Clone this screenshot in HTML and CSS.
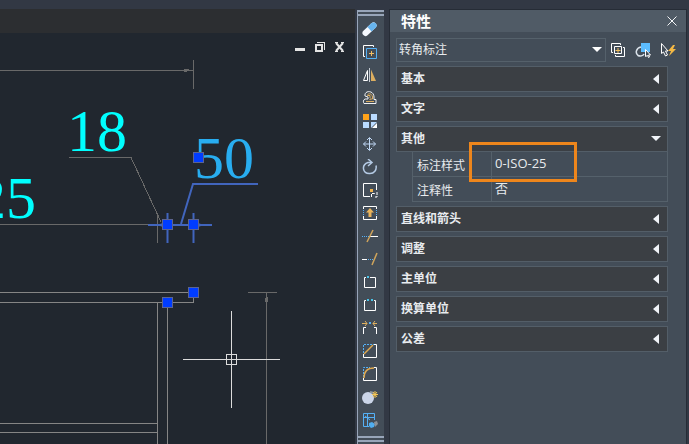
FILE: index.html
```html
<!DOCTYPE html>
<html lang="zh-CN">
<head>
<meta charset="utf-8">
<title>特性</title>
<link rel="stylesheet" href="styles.css">
</head>
<body>
<main class="workspace">
  <section class="document">
    <div class="tabstrip"></div>
    <div class="canvas">
      <svg class="drawing" aria-label="图形">
        <g transform="translate(0 -33)">
          <g class="thin">
            <path d="M0 70.500H194M193.500 60V89"/>
            <path d="M0 224.500H150M69 157.500H131L161 222M157.500 213V243"/>
            <path d="M248 292.500H277M266.500 292V444"/>
          </g>
          <path class="arrow" d="M184 69h5v1h4v1h-6v1h-3zM266 293h1v4h1v5h-3v-4h1z"/>
          <g class="outline">
            <path d="M0 292.500H193.500V302.500H0M157.500 302V444M167.500 302V444M0 423.500H157M0 432.500H157"/>
          </g>
          <g class="selected">
            <path d="M148 225H212M167.500 213V243M193.500 213V243M181 224L193 184H258"/>
            <path class="selected-tip" d="M157 225l9-3v6zM204 225l-9-3v6z"/>
          </g>
          <g class="dimension">
            <text x="67" y="151">18</text>
            <text x="-24" y="218">25</text>
            <text class="picked" x="194" y="178">50</text>
          </g>
          <g class="grip">
            <path d="M193.500 152.500h10v10h-10zM162.500 219.500h10v10h-10zM188.500 219.500h10v10h-10zM188.500 287.500h10v10h-10zM162.500 297.500h10v10h-10z"/>
          </g>
          <path class="crosshair" d="M183 359.500H280M231.500 311V408M226.500 354.500h10v10h-10z"/>
        </g>
      </svg>
      <div class="window-buttons">
        <button type="button" aria-label="最小化"><svg width="12" height="12"><path fill="#e4e4e4" d="M1 7h10v3H1z"/></svg></button>
        <button type="button" aria-label="还原"><svg width="12" height="12"><path fill="#e4e4e4" fill-rule="evenodd" d="M1 3h8v8H1zM3 5v4h4V5zM3 1h8v8h-1V2H3z"/></svg></button>
        <button type="button" aria-label="关闭"><svg width="12" height="12"><path fill="none" stroke="#e4e4e4" stroke-width="2" d="M2 2l7 8M9 2l-7 8"/><path fill="#e4e4e4" d="M1 1h3v1H1zM7 1h3v1H7zM1 10h3v1H1zM7 10h3v1H7z"/></svg></button>
      </div>
    </div>
  </section>

  <nav class="toolbar" aria-label="修改">
    <div class="handle"></div>
    <div class="tools">
      <button type="button" aria-label="删除"><svg viewBox="0 0 16 16"><path d="M3.500 12L11.500 4.500" stroke="#f5f9ff" stroke-width="6" stroke-linecap="round"/><path d="M7.500 8.200L11.500 4.500" stroke="#67b4ee" stroke-width="6"/><path d="M11.500 4.500h.1" stroke="#67b4ee" stroke-width="6" stroke-linecap="round"/></svg></button>
      <button type="button" aria-label="复制"><svg viewBox="0 0 16 16"><path d="M3 12.500H1.500v-11h10V3" stroke="#fff"/><path d="M4.500 4.500h10v10h-10z" stroke="#55b0f5"/><path d="M9.500 7v5M7 9.500h5" stroke="#f1bd63"/></svg></button>
      <button type="button" aria-label="镜像"><svg viewBox="0 0 16 16"><path d="M5.500 3.500v10h-4z" stroke="#fff"/><path d="M7.500 1v14" stroke="#c5cbd2"/><path d="M9 2.500V14h5z" fill="#dcae60"/></svg></button>
      <button type="button" aria-label="偏移"><svg viewBox="0 0 16 16"><path d="M2 13.500h12v-4h-2V7c0-7-10-7-9-1l3 1v2H3c-2 1-2 3-1 4.500z" stroke="#eef0f2"/><path d="M4 11.500h8M8 10V9h2.500V7C10 3 5.500 3 5.500 5.500H8V8" stroke="#dcae60"/></svg></button>
      <button type="button" aria-label="阵列"><svg viewBox="0 0 16 16"><path d="M1 1h6v6H1z" fill="#ffa31a"/><path d="M9 1h6v6H9zM1 9h6v6H1z" fill="#badbff"/><path d="M9 9h6l-6 6z" fill="#badbff"/><path d="M15 10v5h-5z" fill="#fff"/></svg></button>
      <button type="button" aria-label="移动"><svg viewBox="0 0 16 16"><path d="M7.500 2v12M1.500 8h12M5 4l2.500-2.500L10 4M5 12l2.500 2.500L10 12M4 5.500L1.500 8 4 10.500M11 5.500L13.500 8 11 10.500" stroke="#c0d8f5"/></svg></button>
      <button type="button" aria-label="旋转"><svg viewBox="0 0 16 16"><path d="M9 3.500H6C-1 6 .500 15 8 14.500c4 0 7-3.500 6-8" stroke="#b5cbe5" stroke-width="1.500"/><path d="M6 0l4 3.500L6 7" stroke="#b5cbe5" stroke-width="1.500"/></svg></button>
      <button type="button" aria-label="缩放"><svg viewBox="0 0 16 16"><path d="M8 14.500H1.500v-13h13V8" stroke="#fff"/><path d="M8 7h3v3H8z" fill="#eeb34f"/><path d="M9.500 15v-3.500h3V10M15 10v5h-3" stroke="#fff" stroke-dasharray="3 1"/></svg></button>
      <button type="button" aria-label="拉伸"><svg viewBox="0 0 16 16"><path d="M1.500 4V1.500h13V4M1.500 11v3.500h13V11" stroke="#fff"/><path d="M1.500 5v6M14.500 5v6" stroke="#55b0f5" stroke-dasharray="1 1"/><path d="M4 7.500L8 3l4 4.500H9.500V12h-3V7.500z" fill="#e9b45c"/></svg></button>
      <button type="button" aria-label="修剪"><svg viewBox="0 0 16 16"><path d="M0 8.500h8" stroke="#55b0f5" stroke-dasharray="1 1"/><path d="M8 8.500h8" stroke="#fff"/><path d="M5 14L11 2" stroke="#cfa45b" stroke-width="1.500"/></svg></button>
      <button type="button" aria-label="延伸"><svg viewBox="0 0 16 16"><path d="M0 8.500h5" stroke="#fff"/><path d="M6 8.500h6" stroke="#55b0f5" stroke-dasharray="1 1"/><path d="M10 14L15 2" stroke="#cfa45b" stroke-width="1.500"/></svg></button>
      <button type="button" aria-label="打断于点"><svg viewBox="0 0 16 16"><path d="M4 3.500H2.500v10h11v-10H8" stroke="#fff"/><path d="M5 2h2v2H5z" fill="#4bc5e8"/></svg></button>
      <button type="button" aria-label="打断"><svg viewBox="0 0 16 16"><path d="M4 3.500H2.500v10h11v-10H12" stroke="#fff"/><path d="M5 2h2v2H5zM9 2h2v2H9z" fill="#4bc5e8"/></svg></button>
      <button type="button" aria-label="合并"><svg viewBox="0 0 16 16"><path d="M1.500 14V7.500H4M14.500 14V7.500H12" stroke="#fff"/><path d="M0 3.500h5M3 1l2 2.500L3 6M15 3.500h-4M13 1l-2 2.500L13 6" stroke="#dfb060"/><path d="M7 2h2v2H7z" fill="#55b0f5"/></svg></button>
      <button type="button" aria-label="倒角"><svg viewBox="0 0 16 16"><path d="M1.500 13V1.500H13" stroke="#55b0f5" stroke-dasharray="2 1"/><path d="M1.500 11v3.500h13v-13H12" stroke="#fff"/><path d="M2 11L11 2" stroke="#dfaa51" stroke-width="1.500"/></svg></button>
      <button type="button" aria-label="圆角"><svg viewBox="0 0 16 16"><path d="M1.500 11V1.500H8" stroke="#55b0f5" stroke-dasharray="2 1"/><path d="M1.500 12v2.500h13v-13H12" stroke="#fff"/><path d="M2 12C2 5 6 2 12 2" stroke="#dfaa51" stroke-width="1.500"/></svg></button>
      <button type="button" aria-label="分解"><svg viewBox="0 0 16 16"><circle cx="6" cy="9" r="6" fill="#cbd5e8"/><path d="M8 3l4 1" stroke="#8d959f" stroke-width="2"/><path d="M13 2v7M10 5.500h6M11 3l4 5M15 3l-4 5" stroke="#f5c552"/></svg></button>
      <button type="button" aria-label="编辑图块"><svg viewBox="0 0 16 16"><path d="M7 14.500H1.500v-13h11V8M5.500 2v12M2 5.500h10M3 4l5 4" stroke="#55b0f5"/><path d="M7 11l3-1 3 2-1 3-3 1-2-2z" fill="#50aef0"/><path d="M12 10l3-1 1 3-3 3z" fill="#8d9095"/></svg></button>
    </div>
    <div class="handle"></div>
  </nav>

  <aside class="palette">
    <header class="titlebar">
      <h1>特性</h1>
      <button type="button" class="close" aria-label="关闭"><svg width="12" height="12"><path d="M1.500 1.500l9 9M10.500 1.500l-9 9" stroke="#f4f6f8" fill="none"/></svg></button>
    </header>
    <div class="palette-body">
      <div class="selector">
        <div class="combo">
          <select aria-label="对象类型"><option>转角标注</option></select>
          <svg class="caret" width="10" height="6"><path d="M0 0h10L5 5z"/></svg>
        </div>
        <button type="button" aria-label="切换 PICKADD"><svg viewBox="0 0 16 16"><path d="M3 10.500H1.500v-9h9V3M13 5.500h1.500v9h-9V13" stroke="#fff"/><path d="M4.500 4.500h7v7h-7z" stroke="#fff"/><path d="M8 6v5M5.500 8.500h5" stroke="#efbd5d"/></svg></button>
        <button type="button" aria-label="选择对象"><svg viewBox="0 0 16 16"><path d="M6 1h9v9H6z" fill="#5cbdff"/><path d="M6 5C1 6 0 11 3 13.500c2 1 5 .500 6-1.500" stroke="#dce4ec" stroke-width="1.500"/><path d="M10.500 7.500v7l2-1 1 2 1-.500-1-2h2z" fill="#424d59" stroke="#fff"/></svg></button>
        <button type="button" aria-label="快速选择"><svg viewBox="0 0 16 16"><path d="M1.500 1.500v10l2-1.500 2 4 2-1-2-4H8z" stroke="#fff"/><path d="M13 3L8 9h3l-2 5 7-7h-3l2-4z" fill="#f5b944"/></svg></button>
      </div>
      <div class="groups">
        <button type="button" class="group"><span>基本</span><svg width="6" height="10"><path d="M6 0v10L0 5z"/></svg></button>
        <button type="button" class="group"><span>文字</span><svg width="6" height="10"><path d="M6 0v10L0 5z"/></svg></button>
        <section class="expanded">
          <button type="button" class="group" aria-expanded="true"><span>其他</span><svg width="10" height="6"><path d="M0 0h10L5 5z"/></svg></button>
          <div class="properties">
            <table>
              <tr><th scope="row">标注样式</th><td>0-ISO-25</td></tr>
              <tr><th scope="row">注释性</th><td>否</td></tr>
            </table>
            <div class="highlight"></div>
          </div>
        </section>
        <button type="button" class="group"><span>直线和箭头</span><svg width="6" height="10"><path d="M6 0v10L0 5z"/></svg></button>
        <button type="button" class="group"><span>调整</span><svg width="6" height="10"><path d="M6 0v10L0 5z"/></svg></button>
        <button type="button" class="group"><span>主单位</span><svg width="6" height="10"><path d="M6 0v10L0 5z"/></svg></button>
        <button type="button" class="group"><span>换算单位</span><svg width="6" height="10"><path d="M6 0v10L0 5z"/></svg></button>
        <button type="button" class="group"><span>公差</span><svg width="6" height="10"><path d="M6 0v10L0 5z"/></svg></button>
      </div>
    </div>
  </aside>
</main>
</body>
</html>
```
FILE: styles.css
```css
* {
  box-sizing: border-box;
}

body {
  margin: 0;
  background: #323844;
  color: #e8ebee;
  font: 12px/16px "Open Sans", "Noto Sans CJK SC", sans-serif;
}

button {
  display: flex;
  align-items: center;
  justify-content: center;
  padding: 0;
  border: 0;
  background: none;
  color: inherit;
  font: inherit;
}

svg {
  display: block;
  flex: none;
}

.workspace {
  display: flex;
  height: 100vh;
  padding-right: 2px;
}

/* Drawing window */
.document {
  display: flex;
  flex: 1;
  flex-direction: column;
  min-width: 0;
  margin-right: 2px;
  padding-top: 9px;
}

.tabstrip {
  height: 24px;
  background: #2c2e31;
}

.canvas {
  position: relative;
  flex: 1;
  min-height: 0;
  background: #21272f;
}

.drawing {
  width: 100%;
  height: 100%;
  fill: none;
  shape-rendering: crispEdges;
}

.thin {
  stroke: #696969;
}

.arrow {
  fill: #696969;
}

.outline {
  stroke: #858585;
}

.selected {
  stroke: #4165bd;
  stroke-width: 2;
  shape-rendering: auto;
}

.selected-tip {
  fill: #4165bd;
  stroke: none;
}

.dimension {
  fill: #00ffff;
  font: 60px "Liberation Serif", serif;
}

.picked {
  fill: #28adf0;
}

.grip {
  fill: #003cff;
  stroke: #5c6490;
}

.crosshair {
  stroke: #dcdcdc;
}

.window-buttons {
  position: absolute;
  top: 8px;
  right: 9px;
  display: flex;
  gap: 8px;
}

/* Modify toolbar */
.toolbar {
  display: flex;
  flex: none;
  flex-direction: column;
  width: 27px;
  margin: 10px 5px 0 0;
  padding-bottom: 2px;
  border-left: 1px solid #98a5b9;
  background: #434d58;
}

.handle {
  height: 6px;
  flex: none;
  border: solid #98a5b9;
  border-width: 2px 0;
}

.tools {
  display: grid;
  flex: 1;
  grid-auto-rows: 23px;
  align-content: start;
  padding: 1px 2px 0 0;
}

.tools svg,
.selector button svg {
  width: 16px;
  height: 16px;
  fill: none;
}

/* Properties palette */
.palette {
  display: flex;
  flex: none;
  flex-direction: column;
  width: 298px;
  margin-top: 9px;
  border: solid #262c36;
  border-width: 1px 1px 0;
  background: #434d58;
}

.titlebar {
  display: flex;
  align-items: center;
  justify-content: space-between;
  height: 22px;
  padding: 0 8px 0 11px;
  background: #505b66;
}

h1 {
  margin: 0;
  color: #fff;
  font-size: 15px;
  line-height: 22px;
  font-weight: 700;
}

.palette-body {
  padding: 6px 18px 0 6px;
}

.selector {
  display: flex;
  align-items: center;
  gap: 9px;
  margin: 0 -8px 4px 0;
}

.combo {
  position: relative;
  flex: 1;
  margin-right: -5px;
}

select {
  display: block;
  width: 100%;
  height: 24px;
  padding: 0 20px 0 2px;
  border: 1px solid #55616b;
  border-radius: 0;
  appearance: none;
  background: transparent;
  color: inherit;
  font: inherit;
}

.caret {
  position: absolute;
  top: 9px;
  right: 4px;
  fill: #fff;
  pointer-events: none;
}

.groups {
  display: grid;
  gap: 4px;
}

.group {
  justify-content: space-between;
  width: 100%;
  height: 26px;
  padding: 0 8px 0 4px;
  border: 1px solid #535e68;
  background: #3b3f44;
  font-weight: 700;
}

.group svg {
  fill: #f0f3f8;
}

.group[aria-expanded="true"] {
  padding-right: 6px;
}

.properties {
  position: relative;
  margin-left: 16px;
}

table {
  width: 100%;
  border-collapse: separate;
  border-spacing: 0;
  table-layout: fixed;
}

th,
td {
  height: 25px;
  border: solid #55616b;
  border-width: 0 1px 1px 0;
  text-align: left;
  font-weight: 400;
}

th {
  width: 80px;
  padding: 4px 0 0 4px;
  border-left-width: 1px;
}

td {
  padding: 0 0 2px 3px;
  font-size: 13px;
}

.highlight {
  position: absolute;
  top: -10px;
  left: 57px;
  width: 108px;
  height: 40px;
  border: 3px solid #ee861c;
  pointer-events: none;
}
```
